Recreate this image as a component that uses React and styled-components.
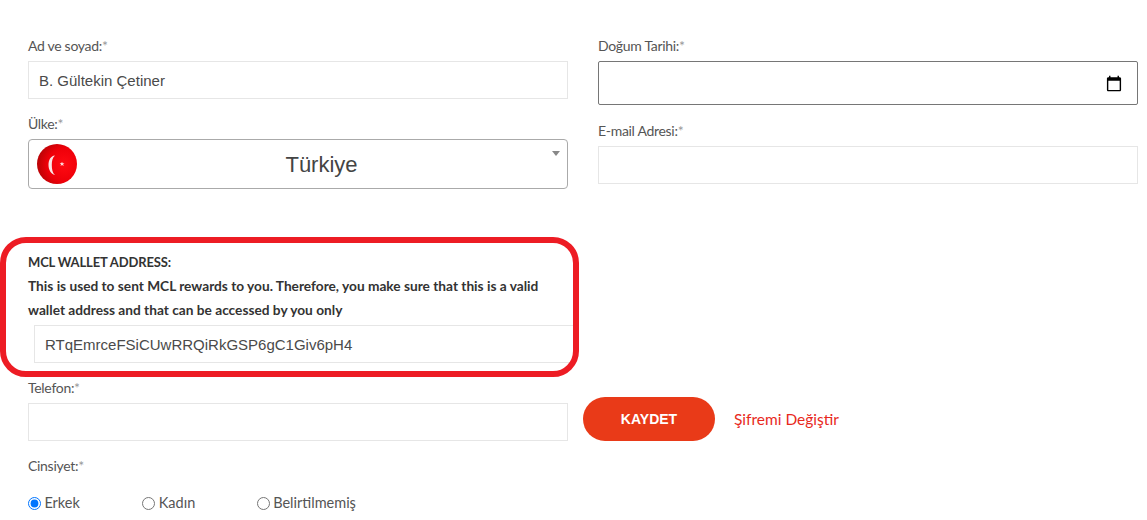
import React from "react";
import styled, { createGlobalStyle } from "styled-components";

function TurkeyFlag() {
  return (
    <svg width="40" height="40" viewBox="0 0 40 40">
      <defs>
        <radialGradient id="flagShade" cx="68%" cy="52%" r="70%">
          <stop offset="0%" stopColor="#ff0a12" />
          <stop offset="60%" stopColor="#ee0009" />
          <stop offset="100%" stopColor="#b50406" />
        </radialGradient>
      </defs>
      <circle cx="20" cy="20" r="20" fill="url(#flagShade)" />
      <path d="M18 11.500C13.500 12 11.500 16 11.500 21S14 30 18 31C15.500 29 14.800 25 14.800 21S15.500 13.500 18 11.500z" fill="#f9e6e6" />
      <path d="M25 17.800l.7 1.500 1.700-.1-1.300 1.100.6 1.600-1.700-.9-1.400 1 .4-1.700-1.300-1.100 1.700-.1z" fill="#fbdcdc" />
    </svg>
  );
}

function Req() {
  return <Star>*</Star>;
}

export default function App() {
  return (
    <Page>
      <GlobalStyle />
      <Columns>
        <Column>
          <Label>Ad ve soyad:<Req /></Label>
          <TextInput type="text" defaultValue="B. Gültekin Çetiner" />
          <Label $top={15} $bottom={5}>Ülke:<Req /></Label>
          <CountrySelect>
            <TurkeyFlag />
            <CountryName>Türkiye</CountryName>
            <Caret />
          </CountrySelect>
          <WalletTitle>MCL WALLET ADDRESS:</WalletTitle>
          <WalletText>This is used to sent MCL rewards to you. Therefore, you make sure that this is a valid wallet address and that can be accessed by you only</WalletText>
          <WalletInput type="text" defaultValue="RTqEmrceFSiCUwRRQiRkGSP6gC1Giv6pH4" />
          <Highlight />
        </Column>
        <Column>
          <Label>Doğum Tarihi:<Req /></Label>
          <DateInput type="date" />
          <Label $top={16}>E-mail Adresi:<Req /></Label>
          <TextInput type="text" />
        </Column>
      </Columns>
      <PhoneRow>
        <PhoneField>
          <Label>Telefon:<Req /></Label>
          <TextInput type="text" />
        </PhoneField>
        <SaveButton type="button">KAYDET</SaveButton>
        <PasswordLink href="#">Şifremi Değiştir</PasswordLink>
      </PhoneRow>
      <Label $top={15}>Cinsiyet:<Req /></Label>
      <RadioRow>
        <RadioItem>
          <input type="radio" name="gender" defaultChecked />
          Erkek
        </RadioItem>
        <RadioItem>
          <input type="radio" name="gender" />
          Kadın
        </RadioItem>
        <RadioItem>
          <input type="radio" name="gender" />
          Belirtilmemiş
        </RadioItem>
      </RadioRow>
    </Page>
  );
}

const GlobalStyle = createGlobalStyle`
  html, body {
    margin: 0;
    background: #fff;
    overflow: hidden;
  }
  * {
    box-sizing: border-box;
  }
`;

const Page = styled.div`
  width: 1147px;
  height: 520px;
  padding: 36px 9px 0 28px;
  font-family: "Lato", "Liberation Sans", sans-serif;
  color: #444;
  overflow: hidden;
`;

const Columns = styled.div`
  display: grid;
  grid-template-columns: 540px 540px;
  column-gap: 30px;
`;

const Column = styled.div`
  position: relative;
  display: flex;
  flex-direction: column;
  align-items: flex-start;
`;

const Label = styled.label`
  display: block;
  font-size: 14px;
  letter-spacing: -0.3px;
  line-height: 20px;
  color: #555;
  margin-top: ${(props) => props.$top || 0}px;
  margin-bottom: ${(props) => props.$bottom || 5}px;
`;

const Star = styled.span`
  color: #999;
`;

const TextInput = styled.input`
  display: block;
  width: 540px;
  height: 38px;
  padding: 0 10px;
  border: 1px solid #e6e6e6;
  background: #fff;
  font-family: "Liberation Sans", Arial, sans-serif;
  font-size: 15px;
  color: #4a4a4a;
  outline: none;
`;

const WalletInput = styled(TextInput)`
  margin: 3px 0 0 6px;
`;

const DateInput = styled.input`
  display: block;
  width: 540px;
  height: 44px;
  padding: 0 10px;
  border: 1px solid #767676;
  border-radius: 2px;
  background: #fff;
  font-size: 14px;

  &::-webkit-datetime-edit {
    visibility: hidden;
  }

  &::-webkit-calendar-picker-indicator {
    width: 18px;
    height: 18px;
    margin: 1px 4px 0 0;
    padding: 0;
  }
`;

const CountrySelect = styled.div`
  position: relative;
  display: flex;
  align-items: center;
  width: 540px;
  height: 50px;
  padding: 0 8px;
  border: 1px solid #aaa;
  border-radius: 4px;
  background: #fff;
`;

const CountryName = styled.span`
  flex: 1;
  padding: 2px 0 0 7px;
  text-align: center;
  font-family: "Liberation Sans", Arial, sans-serif;
  font-size: 22px;
  color: #444;
`;

const Caret = styled.span`
  position: absolute;
  top: 11px;
  right: 7px;
  border-style: solid;
  border-width: 5px 4px 0 4px;
  border-color: #888 transparent transparent transparent;
`;

const WalletTitle = styled.div`
  margin-top: 61px;
  font-size: 13px;
  font-weight: 700;
  letter-spacing: -0.15px;
  line-height: 24px;
  color: #333;
`;

const WalletText = styled.div`
  width: 530px;
  font-size: 13.7px;
  font-weight: 700;
  line-height: 24px;
  color: #333;
`;

const Highlight = styled.div`
  position: absolute;
  left: -28px;
  top: 201px;
  width: 579px;
  height: 140px;
  border: 6px solid #ed1c24;
  border-radius: 26px;
  pointer-events: none;
`;

const PhoneRow = styled.div`
  display: flex;
  align-items: flex-end;
  margin-top: 15px;
`;

const PhoneField = styled.div`
  width: 540px;
`;

const SaveButton = styled.button`
  width: 132px;
  height: 44px;
  margin-left: 15px;
  border: none;
  border-radius: 22px;
  background: #e93a18;
  color: #fff;
  font-family: "Liberation Sans", Arial, sans-serif;
  font-size: 14px;
  font-weight: 700;
`;

const PasswordLink = styled.a`
  margin: 0 0 11px 19px;
  font-size: 15.500px;
  line-height: 22px;
  color: #e8291c;
  text-decoration: none;
`;

const RadioRow = styled.div`
  display: flex;
  margin-top: 17px;
`;

const RadioItem = styled.label`
  display: flex;
  align-items: center;
  width: 114.4px;
  font-size: 14.500px;
  line-height: 20px;
  color: #555;

  input {
    width: 13px;
    height: 13px;
    margin: 0 3.4px 0 0;
  }
`;
